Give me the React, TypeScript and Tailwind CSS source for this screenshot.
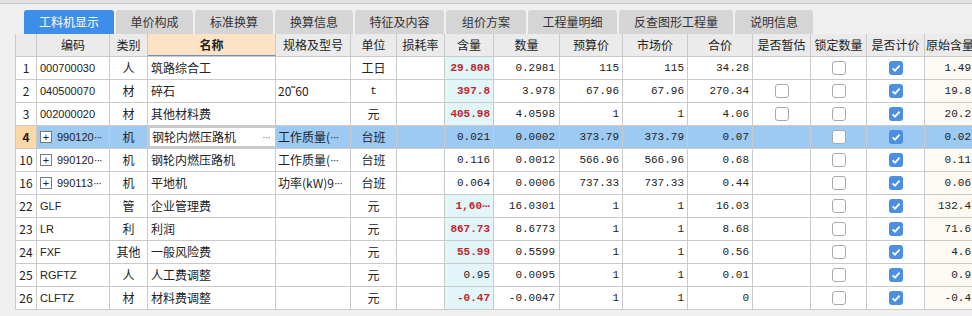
import React from "react";

type Row = {
  no: string;
  code: string;
  expand?: boolean;
  type: string;
  name: string;
  spec: string;
  specCut?: boolean;
  unit: string;
  content: string;
  red?: boolean;
  cyan?: boolean;
  qty: string;
  budget: string;
  market: string;
  total: string;
  temp?: boolean;
  orig: string;
  active?: boolean;
};

const tabs = [
  { label: "工料机显示", w: "w-[90px]" },
  { label: "单价构成", w: "w-[77px]" },
  { label: "标准换算", w: "w-[78px]" },
  { label: "换算信息", w: "w-[78px]" },
  { label: "特征及内容", w: "w-[89px]" },
  { label: "组价方案", w: "w-[80px]" },
  { label: "工程量明细", w: "w-[89px]" },
  { label: "反查图形工程量", w: "w-[114px]" },
  { label: "说明信息", w: "w-[78px]" },
];

const W = {
  no: "w-[21px]",
  code: "w-[73px]",
  type: "w-[38px]",
  name: "w-[128px]",
  spec: "w-[75px]",
  unit: "w-[46px]",
  loss: "w-[48px]",
  content: "w-[49px]",
  qty: "w-[66px]",
  budget: "w-[63px]",
  market: "w-[65px]",
  total: "w-[65px]",
  temp: "w-[58px]",
  lock: "w-[56px]",
  price: "w-[58px]",
  orig: "w-[51px]",
};

const heads: { label: string; w: string }[] = [
  { label: "", w: W.no },
  { label: "编码", w: W.code },
  { label: "类别", w: W.type },
  { label: "名称", w: W.name },
  { label: "规格及型号", w: W.spec },
  { label: "单位", w: W.unit },
  { label: "损耗率", w: W.loss },
  { label: "含量", w: W.content },
  { label: "数量", w: W.qty },
  { label: "预算价", w: W.budget },
  { label: "市场价", w: W.market },
  { label: "合价", w: W.total },
  { label: "是否暂估", w: W.temp },
  { label: "锁定数量", w: W.lock },
  { label: "是否计价", w: W.price },
  { label: "原始含量", w: W.orig },
];

const rows: Row[] = [
  { no: "1", code: "000700030", type: "人", name: "筑路综合工", spec: "", unit: "工日", content: "29.808", red: true, cyan: true, qty: "0.2981", budget: "115", market: "115", total: "34.28", orig: "1.49" },
  { no: "2", code: "040500070", type: "材", name: "碎石", spec: "20˜60", unit: "t", content: "397.8", red: true, cyan: true, qty: "3.978", budget: "67.96", market: "67.96", total: "270.34", temp: true, orig: "19.8" },
  { no: "3", code: "002000020", type: "材", name: "其他材料费", spec: "", unit: "元", content: "405.98", red: true, cyan: true, qty: "4.0598", budget: "1", market: "1", total: "4.06", temp: true, orig: "20.2" },
  { no: "4", code: "990120", expand: true, type: "机", name: "钢轮内燃压路机", spec: "工作质量(", specCut: true, unit: "台班", content: "0.021", qty: "0.0002", budget: "373.79", market: "373.79", total: "0.07", orig: "0.02", active: true },
  { no: "10", code: "990120", expand: true, type: "机", name: "钢轮内燃压路机", spec: "工作质量(", specCut: true, unit: "台班", content: "0.116", qty: "0.0012", budget: "566.96", market: "566.96", total: "0.68", orig: "0.11" },
  { no: "16", code: "990113", expand: true, type: "机", name: "平地机", spec: "功率(kW)9", specCut: true, unit: "台班", content: "0.064", qty: "0.0006", budget: "737.33", market: "737.33", total: "0.44", orig: "0.06" },
  { no: "22", code: "GLF", type: "管", name: "企业管理费", spec: "", unit: "元", content: "1,60", red: true, cyan: true, qty: "16.0301", budget: "1", market: "1", total: "16.03", orig: "132.4" },
  { no: "23", code: "LR", type: "利", name: "利润", spec: "", unit: "元", content: "867.73", red: true, cyan: true, qty: "8.6773", budget: "1", market: "1", total: "8.68", orig: "71.6" },
  { no: "24", code: "FXF", type: "其他", name: "一般风险费", spec: "", unit: "元", content: "55.99", red: true, cyan: true, qty: "0.5599", budget: "1", market: "1", total: "0.56", orig: "4.6" },
  { no: "25", code: "RGFTZ", type: "人", name: "人工费调整", spec: "", unit: "元", content: "0.95", cyan: true, qty: "0.0095", budget: "1", market: "1", total: "0.01", orig: "0.9" },
  { no: "26", code: "CLFTZ", type: "材", name: "材料费调整", spec: "", unit: "元", content: "-0.47", red: true, cyan: true, qty: "-0.0047", budget: "1", market: "1", total: "0", orig: "-0.4" },
];

// narrow "···" like the original grid draws when text is cut
const Dots = () => (
  <span className="font-['Liberation_Sans',sans-serif] text-[11px] tracking-[-1px] shrink-0">···</span>
);

const Box = ({ on }: { on?: boolean }) =>
  on ? (
    <span className="w-[14px] h-[14px] rounded-[3px] bg-[#4a8fe2] flex items-center justify-center">
      <svg width="10" height="10" viewBox="0 0 10 10">
        <path d="M1.6 5.3 L4 7.6 L8.6 2.6" stroke="white" strokeWidth="1.8" fill="none" />
      </svg>
    </span>
  ) : (
    <span className="w-[14px] h-[14px] rounded-[3px] border border-[#a9a9a9] bg-white" />
  );

const cell = "h-full shrink-0 border-r border-[#cacaca] flex items-center overflow-hidden whitespace-nowrap";
const mono = "font-['Liberation_Mono',monospace] text-[11px]";

export default function App() {
  return (
    <div className="w-[972px] h-[316px] overflow-hidden bg-[#f0f0f0] font-['Noto_Sans_CJK_SC',sans-serif] text-[12px] text-[#222]">
      <div className="h-[4px] bg-[#e2e2e2] border-b border-[#c4c4c4]" />
      <div className="h-[6px]" />
      <div className="flex gap-[2px] pl-[24px] h-[24px]">
        {tabs.map((t, i) => (
          <div
            key={t.label}
            className={`${t.w} h-full rounded-t-[3px] flex items-center justify-center ${
              i === 0 ? "bg-[#3d8ee8] text-white" : "bg-[#d5d5d5] text-[#333]"
            }`}
          >
            {t.label}
          </div>
        ))}
      </div>
      <div className="ml-[15px] border-l border-[#cacaca] bg-white w-[962px]">
        <div className="flex h-[23px] bg-[#ebebeb] border-b border-[#cacaca]">
          {heads.map((h) => (
            <div
              key={h.w + h.label}
              className={`${cell} ${h.w} justify-center ${
                h.label === "名称" ? "bg-[#fde3c5] font-bold border-b border-b-[#6f8fbe]" : ""
              }`}
            >
              {h.label}
            </div>
          ))}
        </div>
        {rows.map((r) => (
          <div
            key={r.no}
            className={`flex h-[23px] border-b border-[#cacaca] ${r.active ? "bg-[#9ccaf3]" : "bg-white"}`}
          >
            <div className={`${cell} ${W.no} justify-center text-[12px] ${r.active ? "bg-[#fbd8a5] font-bold" : "bg-white"}`}>
              {r.no}
            </div>
            <div className={`${cell} ${W.code} pl-[3px] font-['Liberation_Sans',sans-serif] text-[11px]`}>
              {r.expand && (
                <span className="w-[12px] h-[12px] border border-[#7a7a7a] bg-white flex items-center justify-center text-[11px] leading-none mr-[5px] shrink-0">
                  +
                </span>
              )}
              {r.code}
              {r.expand && <Dots />}
            </div>
            <div className={`${cell} ${W.type} justify-center`}>{r.type}</div>
            <div
              className={`${cell} ${W.name} ${
                r.active ? "bg-white border-2 border-[#7b7b7b] pl-[2px] pr-[5px] justify-between" : "pl-[3px]"
              }`}
            >
              <span>{r.name}</span>
              {r.active && (
                <span className="text-[#888] font-['Liberation_Sans',sans-serif] text-[11px] tracking-[-1px]">···</span>
              )}
            </div>
            <div className={`${cell} ${W.spec} pl-[2px]`}>
              <span className="overflow-hidden">{r.spec}</span>
              {r.specCut && <Dots />}
            </div>
            <div className={`${cell} ${W.unit} justify-center ${r.unit === "t" ? mono : ""}`}>{r.unit}</div>
            <div className={`${cell} ${W.loss}`} />
            <div
              className={`${cell} ${W.content} justify-end pr-[3px] ${mono} ${r.cyan ? "bg-[#e2f5f9]" : ""} ${
                r.red ? "text-[#c0262c] font-bold" : ""
              }`}
            >
              {r.content}
              {r.content === "1,60" && <Dots />}
            </div>
            <div className={`${cell} ${W.qty} justify-end pr-[4px] ${mono}`}>{r.qty}</div>
            <div className={`${cell} ${W.budget} justify-end pr-[3px] ${mono}`}>{r.budget}</div>
            <div className={`${cell} ${W.market} justify-end pr-[3px] ${mono}`}>{r.market}</div>
            <div className={`${cell} ${W.total} justify-end pr-[3px] ${mono}`}>{r.total}</div>
            <div className={`${cell} ${W.temp} justify-center`}>{r.temp && <Box />}</div>
            <div className={`${cell} ${W.lock} justify-center`}>
              <Box />
            </div>
            <div className={`${cell} ${W.price} justify-center`}>
              <Box on />
            </div>
            <div className={`${cell} ${W.orig} justify-end pr-[4px] ${mono} ${r.active ? "" : "bg-[#fdf9f3]"}`}>
              {r.orig}
            </div>
          </div>
        ))}
      </div>
    </div>
  );
}
